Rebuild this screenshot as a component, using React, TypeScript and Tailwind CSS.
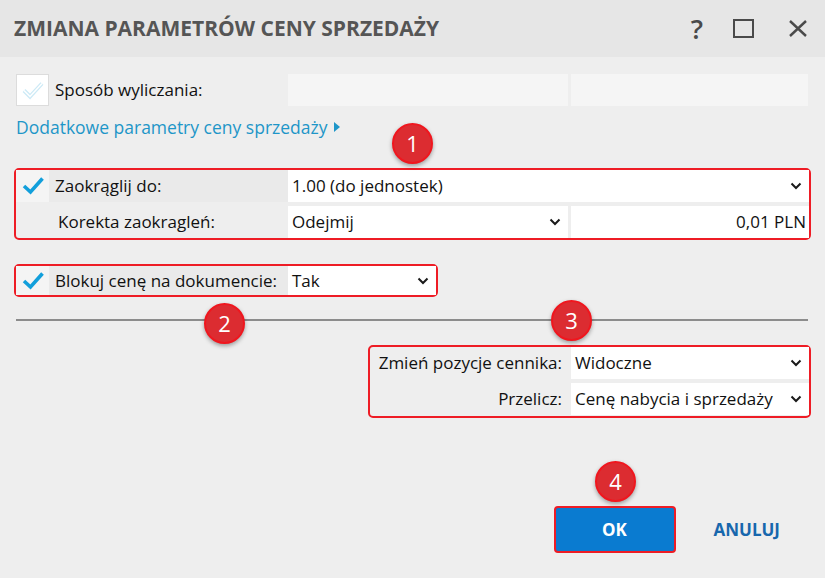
const FONT = "font-['Open_Sans','Noto_Sans',sans-serif]";

function Check({ faded = false }: { faded?: boolean }) {
  if (faded) {
    return (
      <svg width="24" height="24" viewBox="0 0 24 24">
        <path d="M3 12.5 L9 18.5 L21 5.5" fill="none" stroke="#cdeaf6" strokeWidth="4" />
        <path d="M3 12.5 L9 18.5 L21 5.5" fill="none" stroke="#ffffff" strokeWidth="1.5" />
      </svg>
    );
  }
  return (
    <svg width="24" height="24" viewBox="0 0 24 24">
      <path d="M3 12 L9.5 18 L21.5 4.5" fill="none" stroke="#129fdb" strokeWidth="3.6" />
    </svg>
  );
}

function Chevron() {
  return (
    <svg width="12" height="8" viewBox="0 0 12 8">
      <path d="M1.5 1.5 L6 6 L10.5 1.5" fill="none" stroke="#1a1a1a" strokeWidth="2" />
    </svg>
  );
}

function Select({ value, className }: { value: string; className: string }) {
  return (
    <div className={`flex items-center justify-between bg-white pl-[4px] pr-[7px] text-[17px] text-[#111] ${className}`}>
      <span>{value}</span>
      <Chevron />
    </div>
  );
}

function Badge({ n, className }: { n: number; className: string }) {
  return (
    <div
      className={`absolute flex h-[41px] w-[41px] items-center justify-center rounded-full border-2 border-[#f0161e] bg-[#dc2c31] text-[22px] text-white shadow-[0_2px_4px_rgba(0,0,0,0.35)] ${className}`}
    >
      {n}
    </div>
  );
}

export default function App() {
  return (
    <div className={`relative h-[578px] w-[825px] overflow-hidden bg-[#eeeeee] ${FONT}`}>
      {/* header */}
      <div className="flex h-[57px] items-center justify-between bg-[#e6e6e6] pl-[14px] pr-[18px]">
        <div className="whitespace-nowrap text-[21px] font-bold text-[#555]">ZMIANA PARAMETRÓW CENY SPRZEDAŻY</div>
        <div className="flex items-center text-[#4a4a4a]">
          <span className="text-[27px] font-semibold leading-none">?</span>
          <div className="ml-[30px] h-[19px] w-[21px] border-[2.5px] border-[#4a4a4a]" />
          <svg className="ml-[35px]" width="18" height="17" viewBox="0 0 18 17">
            <path d="M1 1 L17 16 M17 1 L1 16" stroke="#4a4a4a" strokeWidth="2.4" />
          </svg>
        </div>
      </div>

      <div className="flex flex-col px-[14px]">
        {/* Sposób wyliczania */}
        <div className="mt-[17px] flex h-[32px] pl-[2px]">
          <div className="flex w-[33px] items-center justify-center border border-[#dcdcdc] bg-white">
            <Check faded />
          </div>
          <div className="flex w-[239px] items-center pl-[6px] text-[17px] text-[#111]">Sposób wyliczania:</div>
          <div className="w-[280px] bg-[#f5f5f5]" />
          <div className="ml-[3px] w-[237px] bg-[#f5f5f5]" />
        </div>

        {/* link */}
        <div className="mt-[10px] flex h-[22px] items-center pl-[2px] text-[17.5px] text-[#1e96c8]">
          <span>Dodatkowe parametry ceny sprzedaży</span>
          <svg className="ml-[7px]" width="6" height="10" viewBox="0 0 6 10">
            <path d="M0 0 L6 5 L0 10 Z" fill="#1e96c8" />
          </svg>
        </div>

        {/* box 1 */}
        <div className="mt-[30px] flex h-[72px] w-[797px] flex-col gap-[4px] rounded-[5px] border-2 border-[#ee1c25]">
          <div className="flex h-[32px]">
            <div className="flex w-[33px] items-center justify-center bg-[#f4f4f4]">
              <Check />
            </div>
            <div className="flex w-[239px] items-center bg-[#eaeaea] pl-[6px] text-[17px] text-[#111]">Zaokrąglij do:</div>
            <Select value="1.00 (do jednostek)" className="w-[521px]" />
          </div>
          <div className="flex h-[32px]">
            <div className="flex w-[272px] items-center pl-[42px] text-[17px] text-[#111]">Korekta zaokragleń:</div>
            <Select value="Odejmij" className="w-[280px]" />
            <div className="ml-[3px] flex w-[238px] items-center justify-end bg-white pr-[3px] text-[17px] text-[#111]">
              0,01 PLN
            </div>
          </div>
        </div>

        {/* box 2 */}
        <div className="mt-[24px] flex h-[33px] w-[424px] rounded-[5px] border-2 border-[#ee1c25]">
          <div className="flex w-[33px] items-center justify-center bg-[#f4f4f4]">
            <Check />
          </div>
          <div className="flex w-[239px] items-center bg-[#eaeaea] pl-[6px] text-[17px] text-[#111]">Blokuj cenę na dokumencie:</div>
          <Select value="Tak" className="w-[148px]" />
        </div>

        {/* separator */}
        <div className="ml-[2px] mt-[22px] h-[2px] w-[792px] bg-[#8c8c8c]" />

        {/* box 3 */}
        <div className="mt-[24px] flex h-[73px] w-[443px] flex-col gap-[4px] self-end rounded-[5px] border-2 border-[#ee1c25]">
          <div className="flex h-[32px]">
            <div className="flex w-[201px] items-center justify-end pr-[9px] text-[17px] text-[#111]">Zmień pozycje cennika:</div>
            <Select value="Widoczne" className="w-[238px]" />
          </div>
          <div className="flex h-[32px]">
            <div className="flex w-[201px] items-center justify-end pr-[9px] text-[17px] text-[#111]">Przelicz:</div>
            <Select value="Cenę nabycia i sprzedaży" className="w-[238px]" />
          </div>
        </div>

        {/* buttons */}
        <div className="mt-[88px] flex h-[47px] items-center justify-end">
          <div className="flex h-[47px] w-[122px] items-center justify-center rounded-[4px] border-2 border-[#ee1c25] bg-[#0a7bd0] text-[17px] font-bold text-white">
            OK
          </div>
          <div className="ml-[38px] mr-[31px] text-[17px] font-bold text-[#1767ad]">ANULUJ</div>
        </div>
      </div>

      <Badge n={1} className="left-[392px] top-[123px]" />
      <Badge n={2} className="left-[204px] top-[303px]" />
      <Badge n={3} className="left-[551px] top-[300px]" />
      <Badge n={4} className="left-[595px] top-[461px]" />
    </div>
  );
}
